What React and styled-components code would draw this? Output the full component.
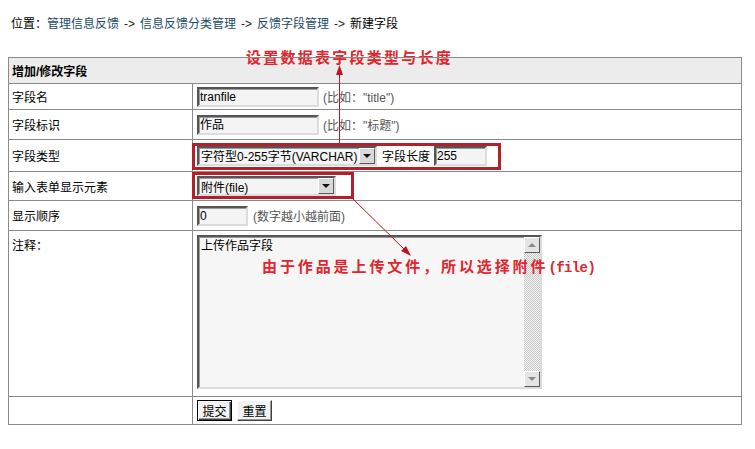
import React from "react";
import styled, { createGlobalStyle } from "styled-components";

const GlobalStyle = createGlobalStyle`
  body {
    margin: 0;
    background: #fff;
    color: #000;
    font-family: "Liberation Sans", "Noto Sans CJK SC", sans-serif;
    font-size: 12px;
  }
`;

const Page = styled.div`
  position: relative;
  width: 755px;
  height: 449px;
  padding: 17px 8px 0;
  box-sizing: border-box;
  overflow: hidden;
`;

const Breadcrumb = styled.div`
  height: 14px;
  line-height: 14px;
  padding-left: 3px;
  margin-bottom: 26px;
  white-space: nowrap;
`;

const Crumb = styled.span`
  color: #1c4b68;
`;

const Sep = styled.span`
  color: #222;
  margin: 0 5px;
`;

const FormTable = styled.table`
  width: 734px;
  border-collapse: collapse;
  table-layout: fixed;
`;

const LabelCol = styled.col`
  width: 184px;
`;

const Row = styled.tr`
  height: ${(p) => p.$h}px;
`;

const HeadCell = styled.td`
  border: 1px solid #8a8a8a;
  background: #ececec;
  font-weight: bold;
  padding: 0 3px;
  vertical-align: middle;
`;

const Label = styled.td`
  border: 1px solid #8a8a8a;
  padding: ${(p) => (p.$top ? "5px 3px 0" : "0 3px")};
  vertical-align: ${(p) => (p.$top ? "top" : "middle")};
  white-space: nowrap;
`;

const Value = styled.td`
  border: 1px solid #8a8a8a;
  padding: ${(p) => (p.$top ? "4px 4px 0" : "0 4px")};
  vertical-align: ${(p) => (p.$top ? "top" : "middle")};
`;

const Line = styled.div`
  display: flex;
  align-items: center;
  gap: ${(p) => p.$gap || 0}px;
`;

const TextInput = styled.div`
  box-sizing: border-box;
  width: ${(p) => p.$w}px;
  height: 20px;
  line-height: 16px;
  padding-left: 1px;
  background: #f4f4f4;
  border-style: solid;
  border-width: 2px;
  border-color: #555 #dcdcdc #dcdcdc #555;
  box-shadow: inset 1px 1px 0 #9a9a9a;
  white-space: nowrap;
  overflow: hidden;
`;

const Hint = styled.span`
  color: #555;
  margin-left: ${(p) => p.$ml || 4}px;
`;

const SelectBox = styled.div`
  box-sizing: border-box;
  width: ${(p) => p.$w}px;
  height: 20px;
  display: flex;
  align-items: center;
  background: #f4f4f4;
  border-style: solid;
  border-width: 2px;
  border-color: #555 #dcdcdc #dcdcdc #555;
  box-shadow: inset 1px 1px 0 #9a9a9a;
  padding-left: 2px;
  white-space: nowrap;
`;

const SelectText = styled.span`
  flex: 1;
  overflow: hidden;
`;

const DropButton = styled.span`
  box-sizing: border-box;
  width: 16px;
  height: 16px;
  flex: none;
  display: flex;
  align-items: center;
  justify-content: center;
  background: #d8d8d8;
  border: 1px solid;
  border-color: #fff #5a5a5a #5a5a5a #fff;

  &::after {
    content: "";
    border-left: 4px solid transparent;
    border-right: 4px solid transparent;
    border-top: ${(p) => (p.$up ? "0" : "4px solid #111")};
    border-bottom: ${(p) => (p.$up ? "4px solid #111" : "0")};
  }
`;

const Plain = styled.span`
  margin: 0 4px 0 5px;
`;

const MemoBox = styled.div`
  box-sizing: border-box;
  width: 345px;
  height: 154px;
  display: flex;
  background: #f6f6f6;
  border-style: solid;
  border-width: 2px;
  border-color: #555 #dcdcdc #dcdcdc #555;
  box-shadow: inset 1px 1px 0 #9a9a9a;
`;

const MemoText = styled.div`
  flex: 1;
  padding: 2px 0 0 2px;
  line-height: 14px;
`;

const ScrollBar = styled.div`
  width: 16px;
  display: flex;
  flex-direction: column;
  background: repeating-conic-gradient(#c8c8c8 0 25%, #f4f4f4 0 50%) 0 0 / 2px 2px;
`;

const ScrollButton = styled(DropButton)`
  background: #e4e4e4;

  &::after {
    border-top-color: #888;
    border-bottom-color: #888;
  }
`;

const ScrollTrack = styled.div`
  flex: 1;
`;

const Button = styled.button`
  box-sizing: border-box;
  width: 35px;
  height: 21px;
  padding: 0;
  font: inherit;
  color: #000;
  background: #f2f2f2;
  border: 1px solid;
  border-color: ${(p) => (p.$primary ? "#000" : "#fff #404040 #404040 #fff")};
  box-shadow: ${(p) =>
    p.$primary
      ? "inset 1px 1px 0 #fff, inset -1px -1px 0 #404040, inset -2px -2px 0 #999"
      : "inset -1px -1px 0 #999"};
`;

const Note = styled.div`
  position: absolute;
  left: ${(p) => p.$x}px;
  top: ${(p) => p.$y}px;
  color: #e3242b;
  font-family: "Noto Sans CJK SC", sans-serif;
  font-weight: bold;
  font-size: 15px;
  line-height: 16px;
  letter-spacing: ${(p) => p.$ls}px;
  white-space: nowrap;
  text-decoration: ${(p) => (p.$strike ? "line-through" : "none")};
  text-decoration-color: #8a8a8a;
  text-decoration-thickness: 1px;
`;

const Latin = styled.span`
  font-family: "Liberation Mono", monospace;
  font-size: 14px;
  letter-spacing: -0.6px;
`;

const Frame = styled.div`
  position: absolute;
  left: ${(p) => p.$x}px;
  top: ${(p) => p.$y}px;
  width: ${(p) => p.$w}px;
  height: ${(p) => p.$h}px;
  box-sizing: border-box;
  border: 3px solid #b3202a;
`;

const Arrows = styled.svg`
  position: absolute;
  left: 0;
  top: 0;
  pointer-events: none;
`;

export default function App() {
  return (
    <Page>
      <GlobalStyle />
      <Breadcrumb>
        位置：<Crumb>管理信息反馈</Crumb>
        <Sep>-&gt;</Sep>
        <Crumb>信息反馈分类管理</Crumb>
        <Sep>-&gt;</Sep>
        <Crumb>反馈字段管理</Crumb>
        <Sep>-&gt;</Sep>
        新建字段
      </Breadcrumb>

      <FormTable>
        <colgroup>
          <LabelCol />
          <col />
        </colgroup>
        <tbody>
          <Row $h={26}>
            <HeadCell colSpan={2}>增加/修改字段</HeadCell>
          </Row>
          <Row $h={26}>
            <Label>字段名</Label>
            <Value>
              <Line>
                <TextInput $w={122}>tranfile</TextInput>
                <Hint>(比如："title")</Hint>
              </Line>
            </Value>
          </Row>
          <Row $h={30}>
            <Label>字段标识</Label>
            <Value>
              <Line>
                <TextInput $w={122}>作品</TextInput>
                <Hint>(比如："标题")</Hint>
              </Line>
            </Value>
          </Row>
          <Row $h={32}>
            <Label>字段类型</Label>
            <Value>
              <Line>
                <SelectBox $w={180}>
                  <SelectText>字符型0-255字节(VARCHAR)</SelectText>
                  <DropButton />
                </SelectBox>
                <Plain>字段长度</Plain>
                <TextInput $w={53}>255</TextInput>
              </Line>
            </Value>
          </Row>
          <Row $h={29}>
            <Label>输入表单显示元素</Label>
            <Value>
              <Line>
                <SelectBox $w={139}>
                  <SelectText>附件(file)</SelectText>
                  <DropButton />
                </SelectBox>
              </Line>
            </Value>
          </Row>
          <Row $h={30}>
            <Label>显示顺序</Label>
            <Value>
              <Line>
                <TextInput $w={51}>0</TextInput>
                <Hint $ml={5}>(数字越小越前面)</Hint>
              </Line>
            </Value>
          </Row>
          <Row $h={166}>
            <Label $top>注释：</Label>
            <Value $top>
              <MemoBox>
                <MemoText>上传作品字段</MemoText>
                <ScrollBar>
                  <ScrollButton $up />
                  <ScrollTrack />
                  <ScrollButton />
                </ScrollBar>
              </MemoBox>
            </Value>
          </Row>
          <Row $h={28}>
            <Label />
            <Value>
              <Line $gap={5}>
                <Button $primary>提交</Button>
                <Button>重置</Button>
              </Line>
            </Value>
          </Row>
        </tbody>
      </FormTable>

      <Frame $x={192} $y={143} $w={309} $h={27} />
      <Frame $x={192} $y={172} $w={162} $h={27} />

      <Arrows width="755" height="449" viewBox="0 0 755 449">
        <line x1="339.5" y1="72" x2="339.5" y2="143" stroke="#c0141f" strokeWidth="1" />
        <polygon points="339.5,65 336,75 343,75" fill="#c0141f" />
        <line x1="352" y1="198" x2="405" y2="250" stroke="#c0141f" strokeWidth="1" />
        <polygon points="411,256 401,251 406,246" fill="#c0141f" />
      </Arrows>

      <Note $x={246} $y={49} $ls={2.25} $strike>
        设置数据表字段类型与长度
      </Note>
      <Note $x={262} $y={258} $ls={2.9}>
        由于作品是上传文件，所以选择附件<Latin>(file)</Latin>
      </Note>
    </Page>
  );
}
